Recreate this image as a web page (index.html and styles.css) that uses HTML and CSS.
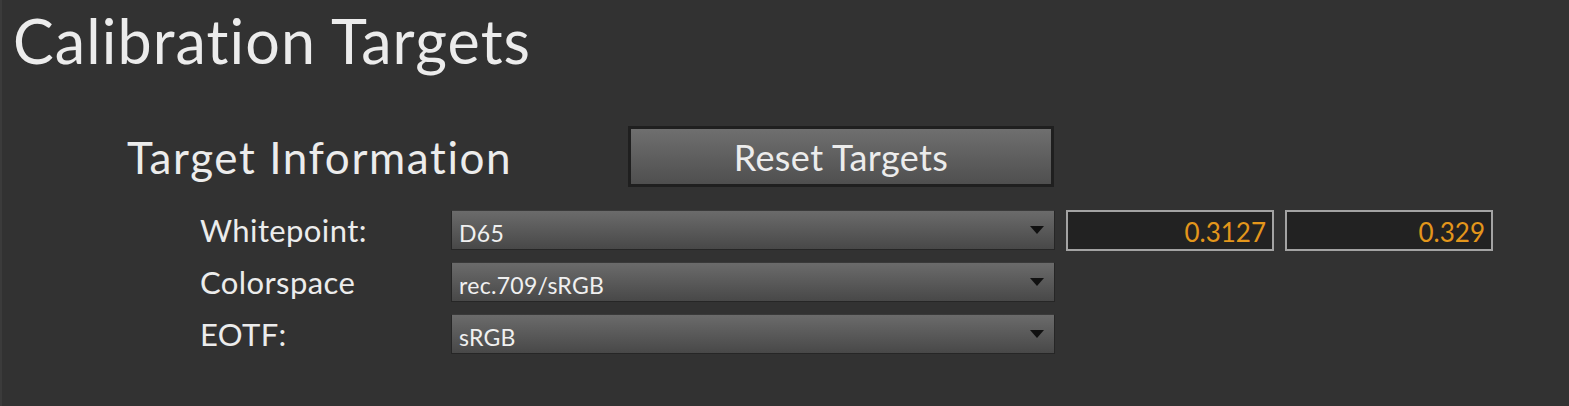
FILE: index.html
```html
<!DOCTYPE html>
<html>
<head>
  <title>Calibration Targets</title>
  <link rel="stylesheet" href="styles.css">
</head>
<body>

  <div class="page">
    <h1>Calibration Targets</h1>

    <div class="target-section">
      <div class="section-head">
        <h2>Target Information</h2>
        <button class="reset-btn">Reset Targets</button>
      </div>

      <div class="target-rows">
        <div class="target-row">
          <label>Whitepoint:</label>
          <div class="dropdown">
            <span>D65</span>
            <span class="caret"></span>
          </div>
          <input class="num-box" type="text" value="0.3127">
          <input class="num-box" type="text" value="0.329">
        </div>
        <div class="target-row">
          <label>Colorspace</label>
          <div class="dropdown">
            <span>rec.709/sRGB</span>
            <span class="caret"></span>
          </div>
        </div>
        <div class="target-row">
          <label>EOTF:</label>
          <div class="dropdown">
            <span>sRGB</span>
            <span class="caret"></span>
          </div>
        </div>
      </div>
    </div>
  </div>

</body>
</html>
```

FILE: styles.css
```css
* {
  box-sizing: border-box;
}

body {
  margin: 0;
  height: 100vh;
  background: #323232;
  border-left: 2px solid #3b3b3b;
  font-family: Lato, "Open Sans", sans-serif;
  color: #ececec;
  overflow: hidden;
}

.page {
  padding-left: 11px;
}

h1 {
  margin: 0;
  padding-top: 5px;
  font-size: 61px;
  line-height: 72px;
  font-weight: 400;
  letter-spacing: 1.1px;
}

.target-section {
  padding-left: 114px;
  margin-top: 49px;
}

.section-head {
  display: flex;
  align-items: center;
  height: 61px;
}

h2 {
  margin: 0;
  width: 501px;
  font-size: 44px;
  font-weight: 400;
  letter-spacing: 1.6px;
}

.reset-btn {
  width: 426px;
  height: 61px;
  border: 3px solid #1f1f1f;
  background: linear-gradient(#6f6f6f, #4f4f4f);
  color: #ececec;
  font-family: inherit;
  font-size: 36px;
  letter-spacing: 0.4px;
  padding: 0;
  cursor: pointer;
}

.target-rows {
  padding-left: 73px;
  margin-top: 23px;
  display: flex;
  flex-direction: column;
  gap: 12px;
}

.target-row {
  display: flex;
  align-items: center;
  height: 40px;
}

.target-row label {
  width: 251px;
  font-size: 31px;
  letter-spacing: 0.4px;
}

.dropdown {
  width: 604px;
  height: 40px;
  display: flex;
  align-items: center;
  justify-content: space-between;
  padding: 5px 10px 0 7px;
  background: linear-gradient(#6b6b6b, #484848);
  border: 1px solid #262626;
  border-top-color: #3a3a3a;
  font-size: 23px;
  letter-spacing: 0.3px;
  color: #f0f0f0;
}

.caret {
  width: 0;
  height: 0;
  border-left: 7px solid transparent;
  border-right: 7px solid transparent;
  border-top: 8px solid #111;
  margin-bottom: 5px;
}

.num-box {
  width: 208px;
  height: 41px;
  margin-left: 11px;
  background: #222;
  border: 2px solid #a3a3a3;
  color: #e3961b;
  font-family: inherit;
  font-size: 26px;
  text-align: right;
  padding: 3px 6px 0 6px;
}
```
